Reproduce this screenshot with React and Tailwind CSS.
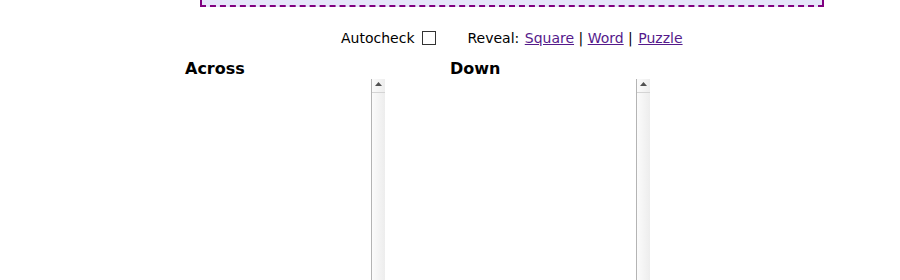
function ClueList() {
  return (
    <div className="mt-[1px] w-[200px] h-[260px] flex">
      <div className="flex-1" />
      <div className="w-[14px] h-full border-l border-[#b4b4b4] bg-gradient-to-r from-[#fbfbfb] to-[#ededed] flex flex-col">
        <div className="h-[14px] border-b border-[#d4d4d4] flex items-start justify-center pt-[3px]">
          <svg width="7" height="4" viewBox="0 0 7 4">
            <polygon points="0,4 3.5,0 7,4" fill="#505050" />
          </svg>
        </div>
      </div>
    </div>
  );
}

export default function App() {
  return (
    <div className="font-['DejaVu_Sans',sans-serif] text-black bg-white w-[900px] h-[280px] overflow-hidden">
      <div className="ml-[200px] w-[624px] h-[7px] bg-[#e6e6fa] border-x-2 border-b-2 border-dashed border-[#800080]" />
      <div className="mt-[23px] ml-[341px] flex text-[14px] leading-[17px]">
        <span>Autocheck</span>
        <span className="ml-[7px] mt-[1px] w-[14px] h-[14px] border border-[#333333] bg-white" />
        <span className="ml-[32px] whitespace-pre">
          Reveal:{" "}
          <a href="#" className="ml-[1px] text-[#551a8b] underline">Square</a>
          {" | "}
          <a href="#" className="text-[#551a8b] underline">Word</a>
          {" | "}
          <a href="#" className="ml-[1px] text-[#551a8b] underline">Puzzle</a>
        </span>
      </div>
      <div className="mt-[12px] ml-[185px] flex gap-[65px]">
        <div className="w-[200px]">
          <div className="font-bold text-[16px] leading-[19px]">Across</div>
          <ClueList />
        </div>
        <div className="w-[200px]">
          <div className="font-bold text-[16px] leading-[19px]">Down</div>
          <ClueList />
        </div>
      </div>
    </div>
  );
}
